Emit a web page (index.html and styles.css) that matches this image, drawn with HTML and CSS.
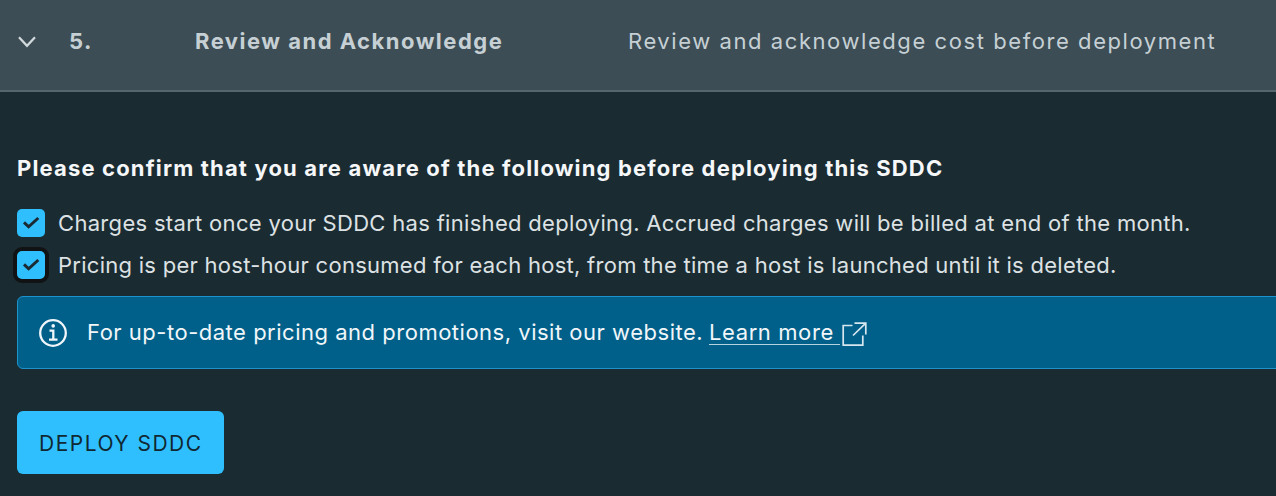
FILE: index.html
```html
<!DOCTYPE html>
<html lang="en">
<head>
<meta charset="utf-8">
<title>Review and Acknowledge</title>
<link rel="stylesheet" href="styles.css">
</head>
<body>
<header class="step">
  <svg class="step-caret" viewBox="0 0 18 12"><path d="M1 1.2 9 9.8l8-8.6"/></svg>
  <span class="step-number">5.</span>
  <span class="step-title">Review and Acknowledge</span>
  <span class="step-description">Review and acknowledge cost before deployment</span>
</header>
<main class="content">
  <h1 class="heading">Please confirm that you are aware of the following before deploying this SDDC</h1>
  <label class="check">
    <span class="box"><svg viewBox="0 0 28 28"><path d="M7 13.4 11.6 17.8 21.3 9"/></svg></span>
    <span class="check-text">Charges start once your SDDC has finished deploying. Accrued charges will be billed at end of the month.</span>
  </label>
  <label class="check">
    <span class="box box-focused"><svg viewBox="0 0 28 28"><path d="M7 13.4 11.6 17.8 21.3 9"/></svg></span>
    <span class="check-text check-text-pricing">Pricing is per host-hour consumed for each host, from the time a host is launched until it is deleted.</span>
  </label>
  <div class="alert">
    <svg class="info" viewBox="0 0 28 28"><circle cx="14" cy="14" r="12.8"/><path d="M10.5 11.7H14.3V20.5M10 20.7H18.5"/><circle class="info-dot" cx="14.2" cy="6.9" r="1.8"/></svg>
    <span class="alert-text">For up-to-date pricing and promotions, visit our website.</span>
    <a class="link">Learn more</a>
    <svg class="external" viewBox="0 0 26 26"><path d="M10.5 3.5H1.2V23.2H20.8V13.5M12.5 1.2H23.8V12.5M23.8 1.2 11 13.5"/></svg>
  </div>
  <button class="deploy">DEPLOY SDDC</button>
</main>
</body>
</html>
```
FILE: styles.css
```css
* { box-sizing: border-box; }
body {
  margin: 0;
  height: 496px;
  overflow: hidden;
  background: #1b2b32;
  color: #dde2e4;
  font: 400 22px/28px Inter, "Liberation Sans", sans-serif;
  white-space: nowrap;
}
svg { display: block; fill: none; flex: none; }
.step {
  display: grid;
  grid-template-columns: 51px 126px 433px 1fr;
  align-items: center;
  height: 92px;
  padding: 0 0 9px 18px;
  background: #3c4d55;
  border-bottom: 2px solid #53666e;
  color: #c6d0d4;
}
.step-caret { width: 18px; height: 12px; stroke: #d3dadd; stroke-width: 2.2; margin-top: 3px; }
.step-number, .step-title { font-weight: 700; letter-spacing: 1.49px; }
.step-description { letter-spacing: 1.57px; }
.content { padding: 62px 0 0 17px; }
.heading { margin: 0 0 27px; font-size: 22px; font-weight: 700; line-height: 28px; letter-spacing: 1.16px; color: #f5f7f8; }
.check { display: flex; align-items: center; gap: 13px; height: 28px; margin-bottom: 14px; }
.check-text { letter-spacing: 0.31px; }
.check-text-pricing { letter-spacing: 0.27px; }
.box { width: 28px; height: 28px; flex: none; border-radius: 5px; background: #2fbfff; }
.box path { stroke: #1b2a32; stroke-width: 3; }
.box-focused { box-shadow: 0 0 0 4px #101214; }
.alert {
  display: flex;
  align-items: center;
  height: 73px;
  margin: 17px -8px 42px 0;
  padding: 0 0 0 21px;
  background: #00608a;
  border: 1px solid #1c93cc;
  border-radius: 6px;
  color: #f0f6f9;
}
.info { width: 28px; height: 28px; margin-right: 20px; stroke: #f0f6f9; stroke-width: 2.3; }
.info-dot { fill: #f0f6f9; stroke: none; }
.alert-text { width: 622px; margin-top: -2px; letter-spacing: 0.51px; }
.link { width: 131px; height: 27px; margin-top: -2px; border-bottom: 1px solid #b4d2e0; line-height: 28px; letter-spacing: 0.6px; }
.external { width: 26px; height: 26px; margin: 4px 0 0 2px; stroke: #d8e7ef; stroke-width: 1.7; }
.deploy {
  display: block;
  width: 207px;
  height: 63px;
  padding: 2px 0 0 22px;
  border: 0;
  border-radius: 6px;
  background: #2fbfff;
  color: #102832;
  font: 400 21px/28px Inter, "Liberation Sans", sans-serif;
  letter-spacing: 1.5px;
  text-align: left;
}
```
